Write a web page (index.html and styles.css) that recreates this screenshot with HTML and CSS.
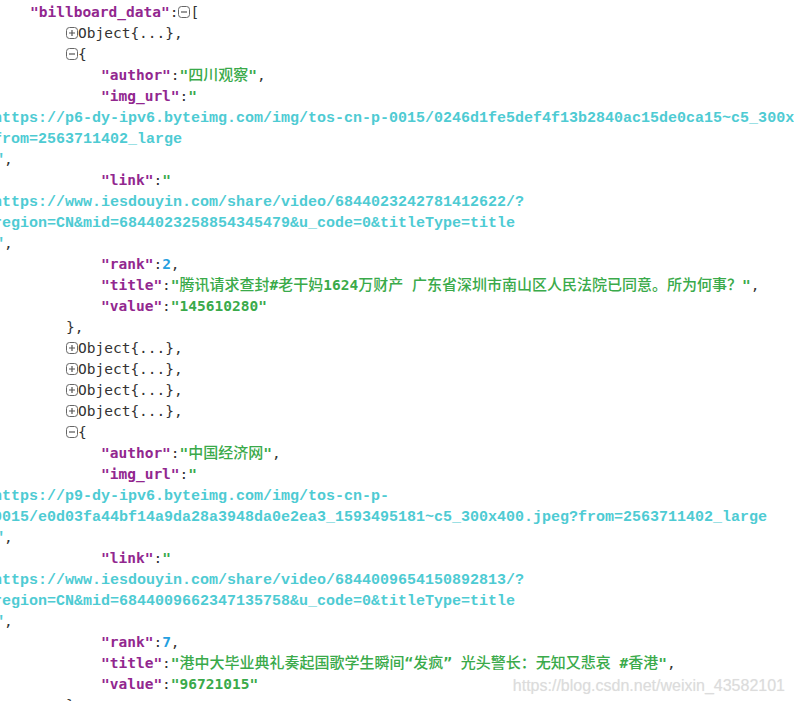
FILE: index.html
```html
<!DOCTYPE html>
<html>
<head>
<meta charset="utf-8">
<link rel="stylesheet" href="styles.css">
</head>
<body>
<div class="view">
  <div class="ln l0"><span class="k">"billboard_data"</span>:<svg class="tg" viewBox="0 0 12 12"><rect x="0.5" y="0.5" width="11" height="11" rx="3" fill="none" stroke="#666" stroke-width="1"/><path d="M3 6h6" stroke="#555" stroke-width="1.2"/></svg>[</div>
  <div class="ln l1"><svg class="tg" viewBox="0 0 12 12"><rect x="0.5" y="0.5" width="11" height="11" rx="3" fill="none" stroke="#666" stroke-width="1"/><path d="M3 6h6M6 3v6" stroke="#555" stroke-width="1.2"/></svg>Object{...},</div>
  <div class="ln l1"><svg class="tg" viewBox="0 0 12 12"><rect x="0.5" y="0.5" width="11" height="11" rx="3" fill="none" stroke="#666" stroke-width="1"/><path d="M3 6h6" stroke="#555" stroke-width="1.2"/></svg>{</div>
  <div class="ln l2"><span class="k">"author"</span>:<span class="s">"<span class="cj">四川观察</span>"</span>,</div>
  <div class="ln l2"><span class="k">"img_url"</span>:<span class="s">"</span></div>
  <div class="ln u"><span class="url">https://p6-dy-ipv6.byteimg.com/img/tos-cn-p-0015/0246d1fe5def4f13b2840ac15de0ca15~c5_300x400.jpeg?</span></div>
  <div class="ln u"><span class="url">from=2563711402_large</span></div>
  <div class="ln q"><span class="url">"</span>,</div>
  <div class="ln l2"><span class="k">"link"</span>:<span class="s">"</span></div>
  <div class="ln u"><span class="url">https://www.iesdouyin.com/share/video/6844023242781412622/?</span></div>
  <div class="ln u"><span class="url">region=CN&amp;mid=6844023258854345479&amp;u_code=0&amp;titleType=title</span></div>
  <div class="ln q"><span class="url">"</span>,</div>
  <div class="ln l2"><span class="k">"rank"</span>:<span class="n">2</span>,</div>
  <div class="ln l2"><span class="k">"title"</span>:<span class="s">"<span class="cj">腾讯请求查封</span>#<span class="cj">老干妈</span>1624<span class="cj">万财产</span> <span class="cj">广东省深圳市南山区人民法院已同意。所为何事？</span>"</span>,</div>
  <div class="ln l2"><span class="k">"value"</span>:<span class="s">"145610280"</span></div>
  <div class="ln l1">},</div>
  <div class="ln l1"><svg class="tg" viewBox="0 0 12 12"><rect x="0.5" y="0.5" width="11" height="11" rx="3" fill="none" stroke="#666" stroke-width="1"/><path d="M3 6h6M6 3v6" stroke="#555" stroke-width="1.2"/></svg>Object{...},</div>
  <div class="ln l1"><svg class="tg" viewBox="0 0 12 12"><rect x="0.5" y="0.5" width="11" height="11" rx="3" fill="none" stroke="#666" stroke-width="1"/><path d="M3 6h6M6 3v6" stroke="#555" stroke-width="1.2"/></svg>Object{...},</div>
  <div class="ln l1"><svg class="tg" viewBox="0 0 12 12"><rect x="0.5" y="0.5" width="11" height="11" rx="3" fill="none" stroke="#666" stroke-width="1"/><path d="M3 6h6M6 3v6" stroke="#555" stroke-width="1.2"/></svg>Object{...},</div>
  <div class="ln l1"><svg class="tg" viewBox="0 0 12 12"><rect x="0.5" y="0.5" width="11" height="11" rx="3" fill="none" stroke="#666" stroke-width="1"/><path d="M3 6h6M6 3v6" stroke="#555" stroke-width="1.2"/></svg>Object{...},</div>
  <div class="ln l1"><svg class="tg" viewBox="0 0 12 12"><rect x="0.5" y="0.5" width="11" height="11" rx="3" fill="none" stroke="#666" stroke-width="1"/><path d="M3 6h6" stroke="#555" stroke-width="1.2"/></svg>{</div>
  <div class="ln l2"><span class="k">"author"</span>:<span class="s">"<span class="cj">中国经济网</span>"</span>,</div>
  <div class="ln l2"><span class="k">"img_url"</span>:<span class="s">"</span></div>
  <div class="ln u"><span class="url">https://p9-dy-ipv6.byteimg.com/img/tos-cn-p-</span></div>
  <div class="ln u"><span class="url">0015/e0d03fa44bf14a9da28a3948da0e2ea3_1593495181~c5_300x400.jpeg?from=2563711402_large</span></div>
  <div class="ln q"><span class="url">"</span>,</div>
  <div class="ln l2"><span class="k">"link"</span>:<span class="s">"</span></div>
  <div class="ln u"><span class="url">https://www.iesdouyin.com/share/video/6844009654150892813/?</span></div>
  <div class="ln u"><span class="url">region=CN&amp;mid=6844009662347135758&amp;u_code=0&amp;titleType=title</span></div>
  <div class="ln q"><span class="url">"</span>,</div>
  <div class="ln l2"><span class="k">"rank"</span>:<span class="n">7</span>,</div>
  <div class="ln l2"><span class="k">"title"</span>:<span class="s">"<span class="cj">港中大毕业典礼奏起国歌学生瞬间</span>“<span class="cj">发疯</span>” <span class="cj">光头警长：无知又悲哀</span> #<span class="cj">香港</span>"</span>,</div>
  <div class="ln l2"><span class="k">"value"</span>:<span class="s">"96721015"</span></div>
  <div class="ln l1">},</div>
</div>
<div class="wm">https://blog.csdn.net/weixin_43582101</div>
</body>
</html>
```
FILE: styles.css
```css
html, body {
  margin: 0;
  padding: 0;
  background: #fff;
  overflow: hidden;
}
body {
  width: 794px;
  height: 701px;
  position: relative;
}
.view {
  padding-top: 2px;
  font-family: "DejaVu Sans Mono", "Noto Sans CJK SC", monospace;
  font-size: 14.5px;
  color: #333;
}
.ln {
  height: 21px;
  line-height: 21px;
  white-space: pre;
  overflow: visible;
}
.l0 { padding-left: 30px; }
.l1 { padding-left: 66px; }
.l2 { padding-left: 101px; }
.u { margin-left: -7px; }
.q { margin-left: -5px; }
.k {
  color: #92278f;
  font-weight: bold;
}
.s {
  color: #3aaa4a;
  font-weight: bold;
}
.cj {
  font-family: "Noto Sans CJK SC", sans-serif;
  font-size: 15px;
  font-weight: 500;
  line-height: 1;
}
.n {
  color: #25a0e0;
  font-weight: bold;
}
.url {
  font-family: "Liberation Mono", monospace;
  font-size: 15px;
  font-weight: bold;
  color: #4ecbd3;
}
.tg {
  width: 12px;
  height: 12px;
  vertical-align: -1px;
}
.wm {
  position: absolute;
  right: 9px;
  bottom: 6px;
  font-family: "Liberation Sans", Arial, sans-serif;
  font-size: 16px;
  color: #dcdcdc;
  text-shadow: 0 0 1px rgba(0,0,0,0.08);
}
```
